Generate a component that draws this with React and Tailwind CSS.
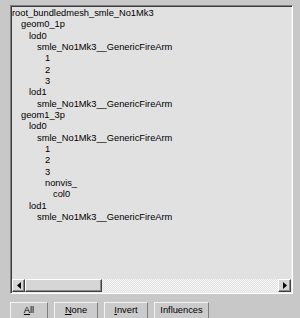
import React from "react";

const nodes = [
  ["root_bundledmesh_smle_No1Mk3", 0],
  ["geom0_1p", 1],
  ["lod0", 2],
  ["smle_No1Mk3__GenericFireArm", 3],
  ["1", 4],
  ["2", 4],
  ["3", 4],
  ["lod1", 2],
  ["smle_No1Mk3__GenericFireArm", 3],
  ["geom1_3p", 1],
  ["lod0", 2],
  ["smle_No1Mk3__GenericFireArm", 3],
  ["1", 4],
  ["2", 4],
  ["3", 4],
  ["nonvis_", 4],
  ["col0", 5],
  ["lod1", 2],
  ["smle_No1Mk3__GenericFireArm", 3],
];

const indent = ["pl-0", "pl-[9px]", "pl-[17px]", "pl-[25px]", "pl-[33px]", "pl-[41px]"];

function ArrowButton({ dir }) {
  return (
    <div className="flex h-[13px] w-[13px] shrink-0 items-center justify-center border border-t-white border-l-white border-r-[#404040] border-b-[#404040] bg-[#d6d6d6] shadow-[inset_-1px_-1px_0_#8a8a8a]">
      <svg width="4" height="7" viewBox="0 0 4 7">
        {dir === "left" ? <polygon points="4,0 4,7 0,3.5" fill="#000" /> : <polygon points="0,0 0,7 4,3.5" fill="#000" />}
      </svg>
    </div>
  );
}

function Btn({ children, w }) {
  return (
    <div className={`${w} h-[22px] shrink-0 border border-t-[#f4f4f4] border-l-[#f4f4f4] border-r-[#7e7e7e] border-b-[#7e7e7e] bg-[#cbcbcb] pt-[2px] text-center text-[9.3px] leading-[11px] text-black`}>
      {children}
    </div>
  );
}

export default function App() {
  return (
    <div className="h-[318px] w-[300px] overflow-hidden bg-[#c8c8c8] pl-[10px] pt-[5px] font-['Liberation_Sans',Arial,sans-serif]">
      <div className="flex h-[289px] w-[283px] flex-col border border-t-[#808080] border-l-[#808080] border-r-white border-b-white bg-[#e1e1e1] shadow-[inset_1px_1px_0_#3c3c3c,inset_-1px_-1px_0_#ececec] p-px">
        <div className="flex-1 overflow-hidden pt-px text-[9.3px] leading-[11.33px] text-black">
          {nodes.map(([label, level], i) => (
            <div key={i} className={`${indent[level]} whitespace-nowrap`}>
              {label}
            </div>
          ))}
        </div>
        <div className="flex h-[13px] shrink-0">
          <ArrowButton dir="left" />
          <div className="h-[13px] w-[77px] shrink-0 border border-t-white border-l-white border-r-[#404040] border-b-[#404040] bg-[#d6d6d6] shadow-[inset_-1px_-1px_0_#8a8a8a]" />
          <div className="h-[13px] flex-1 bg-[repeating-conic-gradient(#f7f7f7_0%_25%,#e0e0e0_0%_50%)] bg-size-[2px_2px]" />
          <ArrowButton dir="right" />
        </div>
      </div>
      <div className="mt-[8px] flex gap-[6px]">
        <Btn w="w-[38px]"><span className="underline">A</span>ll</Btn>
        <Btn w="w-[44px]"><span className="underline">N</span>one</Btn>
        <Btn w="w-[44px]"><span className="underline">I</span>nvert</Btn>
        <Btn w="w-[55px]">Influences</Btn>
      </div>
    </div>
  );
}
